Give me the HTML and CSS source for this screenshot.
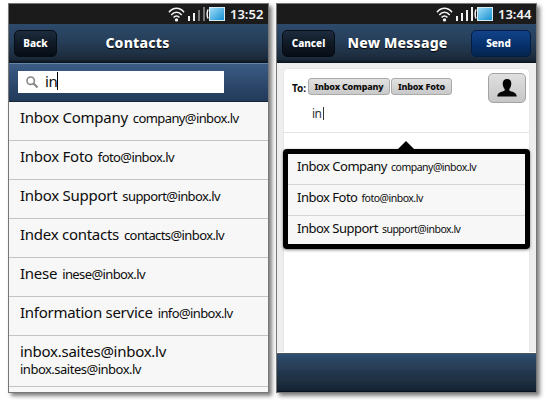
FILE: index.html
```html
<!DOCTYPE html>
<html lang="en">
<head>
  <meta charset="UTF-8">
  <meta name="viewport" content="width=device-width, initial-scale=1.0">
  <title>Contacts</title>
  <link rel="stylesheet" href="styles.css">
</head>
<body>
  <svg width="0" height="0" class="defs">
    <linearGradient id="charge" x1="0" y1="0" x2="1" y2="1">
      <stop offset="0" stop-color="#a5e1fb"/>
      <stop offset="1" stop-color="#0f8dd0"/>
    </linearGradient>
    <symbol id="wifi" viewBox="0 0 17 15">
      <g fill="none" stroke="#f2f2f2" stroke-width="1.6">
        <path d="M1 5.200C5.300 0 11.700 0 16 5.200"/>
        <path d="M3.300 7.900C6.300 4.300 10.700 4.300 13.700 7.900"/>
        <path d="M5.600 10.600C7.300 8.500 9.700 8.500 11.400 10.600"/>
      </g>
      <circle cx="8.500" cy="12.900" r="1.700" fill="#f2f2f2"/>
    </symbol>
    <symbol id="battery" viewBox="0 0 19 14">
      <path d="M2.200 2.500C.8 4 .8 10 2.200 11.500" fill="none" stroke="#f2f2f2" stroke-width="1.500"/>
      <rect x="3.500" y=".5" width="15" height="13" fill="url(#charge)" stroke="#d8eaf2"/>
    </symbol>
  </svg>

  <div class="phone">
    <div class="status">
      <svg class="wifi"><use href="#wifi"/></svg>
      <svg class="signal" viewBox="0 0 17 14">
        <path d="M0 9h2v5H0zM5 6h2v8H5z" fill="#f2f2f2"/>
        <path d="M10 3h2v11h-2zM15 0h2v14h-2z" fill="#777"/>
      </svg>
      <svg class="battery"><use href="#battery"/></svg>
      <span class="clock">13:52</span>
    </div>
    <div class="header">
      <button class="btn back">Back</button>
      <h1>Contacts</h1>
    </div>
    <div class="search">
      <div class="search-box">
        <svg class="lens" viewBox="0 0 12 12">
          <circle cx="4.7" cy="4.7" r="3.7" fill="none" stroke="#858585" stroke-width="1.6"/>
          <path d="M7.5 7.5l4 4" stroke="#858585" stroke-width="2"/>
        </svg>
        <span class="typed">in</span>
      </div>
    </div>
    <ul class="contacts">
      <li><span class="name">Inbox Company</span><span class="mail">company@inbox.lv</span></li>
      <li><span class="name">Inbox Foto</span><span class="mail">foto@inbox.lv</span></li>
      <li><span class="name">Inbox Support</span><span class="mail">support@inbox.lv</span></li>
      <li><span class="name">Index contacts</span><span class="mail">contacts@inbox.lv</span></li>
      <li><span class="name">Inese</span><span class="mail">inese@inbox.lv</span></li>
      <li><span class="name">Information service</span><span class="mail">info@inbox.lv</span></li>
      <li class="stacked"><span class="name">inbox.saites@inbox.lv</span><span class="mail">inbox.saites@inbox.lv</span></li>
    </ul>
  </div>

  <div class="phone">
    <div class="status">
      <svg class="wifi"><use href="#wifi"/></svg>
      <svg class="signal" viewBox="0 0 17 14">
        <path d="M0 9h2v5H0zM5 6h2v8H5zM10 3h2v11h-2zM15 0h2v14h-2z" fill="#f2f2f2"/>
      </svg>
      <svg class="battery"><use href="#battery"/></svg>
      <span class="clock">13:44</span>
    </div>
    <div class="header message">
      <button class="btn cancel">Cancel</button>
      <h1>New Message</h1>
      <button class="btn send">Send</button>
    </div>
    <div class="compose">
      <div class="card">
        <div class="recipients">
          <label>To:</label>
          <div class="field">
            <div class="chips">
              <span class="chip company">Inbox Company</span>
              <span class="chip foto">Inbox Foto</span>
            </div>
            <span class="typed small">in</span>
          </div>
          <button class="pick">
            <svg viewBox="0 0 20 18">
              <path d="M10 0C7.300 0 5.700 1.800 5.700 4.500c0 2.200.8 4.300 2 5.400v1.700C5.500 13 .5 13 .2 17.500h19.600C19.500 13 14.500 13 12.300 11.600V9.900c1.200-1.100 2-3.200 2-5.400C14.300 1.800 12.700 0 10 0z" fill="#050505"/>
            </svg>
          </button>
        </div>
      </div>
      <div class="popup">
        <ul>
          <li><span class="name">Inbox Company</span><span class="mail">company@inbox.lv</span></li>
          <li><span class="name">Inbox Foto</span><span class="mail">foto@inbox.lv</span></li>
          <li><span class="name">Inbox Support</span><span class="mail">support@inbox.lv</span></li>
        </ul>
      </div>
    </div>
    <div class="footer"></div>
  </div>
</body>
</html>
```

FILE: styles.css
```css
* {
  box-sizing: border-box;
}
body {
  margin: 0;
  padding: 3px 0 0 8px;
  height: 400px;
  display: flex;
  align-items: flex-start;
  gap: 7px;
  overflow: hidden;
  background: #fff;
  font-family: "Noto Sans", sans-serif;
  color: #0c0c0c;
}
.defs {
  position: absolute;
}
.phone {
  width: 261px;
  height: 390px;
  flex: none;
  display: flex;
  flex-direction: column;
  border: 1px solid #777;
  background: #f7f7f7;
  box-shadow: 3px 3px 4px rgba(0, 0, 0, 0.5);
}

/* status bar */
.status {
  height: 20px;
  flex: none;
  display: flex;
  align-items: center;
  justify-content: flex-end;
  padding-right: 4px;
  background: #1b1b1b;
  color: #f4f4f4;
}
.wifi {
  width: 17px;
  height: 15px;
  margin-right: 3px;
}
.signal {
  width: 17px;
  height: 14px;
  margin-right: 1px;
}
.battery {
  width: 19px;
  height: 14px;
}
.clock {
  width: 34px;
  margin-left: 5px;
  font-size: 13px;
  font-weight: 600;
  line-height: 20px;
  white-space: nowrap;
}

/* title bar */
.header {
  height: 39px;
  flex: none;
  display: grid;
  grid-template-columns: 63px 1fr 65px;
  align-items: center;
  padding: 0 5px 1px;
  background: linear-gradient(#2d4a6b, #263e58 45%, #1b2a3a 90%, #08121c);
  color: #fff;
}
.message {
  grid-template-columns: 53px 1fr 73px;
}
.message h1 {
  padding-left: 2px;
}
.message .send {
  margin-left: 13px;
}
h1 {
  margin: 0;
  font-size: 14px;
  font-weight: 800;
  line-height: 20px;
  letter-spacing: 0.2px;
  text-align: center;
  white-space: nowrap;
  text-shadow: 0 1px 1px #000;
}
.btn {
  height: 27px;
  padding: 0 0 1px;
  border: 1px solid #060c13;
  border-radius: 5px;
  background: linear-gradient(#1d2c3e, #101a26 50%, #070d14);
  color: #fff;
  font: 800 10px "Noto Sans", sans-serif;
}
.back {
  width: 43px;
}
.cancel {
  width: 53px;
}
.send {
  width: 60px;
  padding-right: 5px;
  border-color: #041c42;
  background: linear-gradient(#114289, #08336f 50%, #03254f);
}

/* search */
.search {
  height: 39px;
  flex: none;
  padding: 7px 9px;
  border-top: 1px solid #6684a6;
  border-bottom: 1px solid #14253a;
  background: linear-gradient(#3c5c85, #2b4669 60%, #233b5a);
}
.search-box {
  width: 206px;
  height: 22px;
  display: flex;
  align-items: center;
  padding: 0 0 1px 8px;
  background: #fff;
}
.lens {
  width: 12px;
  height: 12px;
  margin-right: 7px;
}
.typed {
  margin-top: -2px;
  border-right: 1px solid #000;
  font-size: 15px;
  line-height: 18px;
  letter-spacing: -0.4px;
}

/* contact list */
ul {
  margin: 0;
  padding: 0;
  list-style: none;
}
.contacts li {
  height: 39px;
  padding: 3px 0 0 11px;
  border-bottom: 1px solid #c4c4c4;
  line-height: 24px;
  white-space: nowrap;
}
.contacts .name {
  margin-right: 5px;
  font-size: 15px;
  letter-spacing: -0.27px;
}
.contacts .mail {
  font-size: 13px;
  letter-spacing: -0.6px;
}
.contacts .stacked {
  height: 51px;
  display: flex;
  flex-direction: column;
}
.contacts .stacked .mail {
  line-height: 13px;
  letter-spacing: -0.5px;
}

/* new message */
.compose {
  flex: 1;
  padding: 5px 6px 0;
  background: #eee;
  border-bottom: 1px solid #fff;
  position: relative;
}
.card {
  height: 100%;
  background: #fff;
  border: 1px solid #e6e6e6;
  border-bottom: 0;
  border-radius: 5px 5px 0 0;
}
.recipients {
  height: 64px;
  display: flex;
  padding: 4px 3px 0 8px;
  border-bottom: 1px solid #e4e4e4;
}
.recipients label {
  width: 16px;
  padding-top: 8px;
  font-size: 10px;
  font-weight: 700;
  line-height: 15px;
}
.field {
  flex: 1;
  padding-top: 5px;
}
.chips {
  display: flex;
  gap: 1px;
  margin-bottom: 12px;
}
.chip {
  height: 17px;
  border: 1px solid #aaa;
  border-radius: 3px;
  background: linear-gradient(#e2e2e2, #c9c9c9);
  font-size: 9px;
  font-weight: 800;
  line-height: 15px;
  letter-spacing: -0.2px;
  text-align: center;
  white-space: nowrap;
}
.company {
  width: 82px;
}
.foto {
  width: 61px;
}
.typed.small {
  display: block;
  width: 12px;
  margin: 0 0 0 4px;
  font-size: 12px;
  line-height: 13px;
  letter-spacing: -0.7px;
  border-color: #333;
  color: #333;
}
.pick {
  width: 38px;
  height: 30px;
  padding: 0;
  display: flex;
  align-items: center;
  justify-content: center;
  border: 1px solid #a3a3a3;
  border-radius: 5px;
  background: linear-gradient(#e0e0e0, #c6c6c6);
}
.pick svg {
  width: 20px;
  height: 18px;
}

/* suggestions float over the message body */
.popup {
  position: absolute;
  left: 6px;
  right: 6px;
  top: 86px;
  height: 100px;
  border: 5px solid #000;
  border-radius: 4px;
  background: #f7f7f7;
  box-shadow: 0 1px 3px rgba(0, 0, 0, 0.5);
}
.popup::before {
  content: "";
  position: absolute;
  left: 109px;
  top: -13px;
  border: 9px solid transparent;
  border-top: 0;
  border-bottom-color: #000;
}
.popup li {
  height: 31px;
  padding-left: 9px;
  border-bottom: 1px solid #d6d6d6;
  line-height: 23px;
  white-space: nowrap;
}
.popup li:last-child {
  border-bottom: 0;
}
.popup .name {
  margin-right: 4px;
  font-size: 13px;
  letter-spacing: -0.5px;
}
.popup .mail {
  font-size: 10.5px;
  letter-spacing: -0.5px;
}
.footer {
  height: 39px;
  flex: none;
  border-top: 1px solid #555;
  background: linear-gradient(#2e5175, #29435f 18%, #293e57 38%, #22384f 44%, #203142 68%, #142434 95%, #050d18);
}
```
